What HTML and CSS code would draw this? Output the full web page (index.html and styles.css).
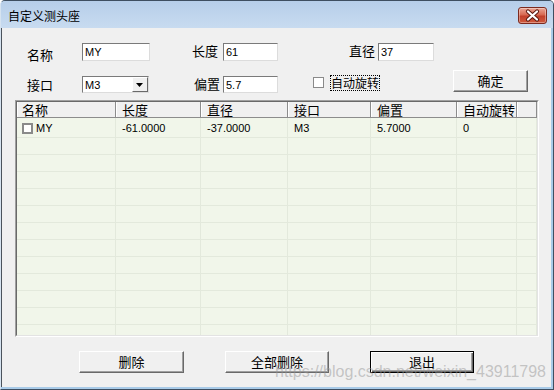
FILE: index.html
```html
<!DOCTYPE html>
<html lang="zh-CN">
<head>
    <meta charset="UTF-8">
    <title>自定义测头座</title>
    <link rel="stylesheet" href="styles.css">
</head>
<body>
    <div class="window">
        <div class="titlebar">
            <span class="title">自定义测头座</span>
            <button class="close" aria-label="关闭">
                <svg width="27" height="15" viewBox="0 0 27 15">
                    <path d="M9 3.5 L18 11.5 M18 3.5 L9 11.5" stroke="#5b1b12" stroke-width="4.2" stroke-linecap="round"/>
                    <path d="M9 3.5 L18 11.5 M18 3.5 L9 11.5" stroke="#ffffff" stroke-width="2.2" stroke-linecap="round"/>
                </svg>
            </button>
        </div>

        <div class="client">
            <div class="row row-top">
                <label class="lbl lbl-name">名称</label>
                <input class="edit edit-name" value="MY">
                <label class="lbl lbl-right w-len">长度</label>
                <input class="edit edit-short" value="61">
                <label class="lbl lbl-right w-dia">直径</label>
                <input class="edit edit-dia" value="37">
            </div>

            <div class="row row-second">
                <label class="lbl lbl-port">接口</label>
                <div class="combo">
                    <span class="combo-text">M3</span>
                    <span class="combo-drop">
                        <svg width="8" height="4" viewBox="0 0 8 4"><path d="M0 0 H7 L3.5 4 Z" fill="#000"/></svg>
                    </span>
                </div>
                <label class="lbl lbl-right w-off">偏置</label>
                <input class="edit edit-short" value="5.7">
                <span class="check"></span>
                <span class="check-label">自动旋转</span>
                <button class="btn btn-ok">确定</button>
            </div>

            <div class="list">
                <div class="list-inner">
                    <table>
                        <colgroup>
                            <col class="c-name"><col class="c-len"><col class="c-dia">
                            <col class="c-port"><col class="c-off"><col class="c-rot"><col class="c-fill">
                        </colgroup>
                        <thead>
                            <tr>
                                <th>名称</th><th>长度</th><th>直径</th><th>接口</th><th>偏置</th><th>自动旋转</th><th></th>
                            </tr>
                        </thead>
                        <tbody>
                            <tr class="data-row">
                                <td class="cell-name"><span class="row-check"></span>MY</td>
                                <td>-61.0000</td><td>-37.0000</td><td>M3</td><td>5.7000</td><td>0</td><td></td>
                            </tr>
                            <tr><td></td><td></td><td></td><td></td><td></td><td></td><td></td></tr>
                            <tr><td></td><td></td><td></td><td></td><td></td><td></td><td></td></tr>
                            <tr><td></td><td></td><td></td><td></td><td></td><td></td><td></td></tr>
                            <tr><td></td><td></td><td></td><td></td><td></td><td></td><td></td></tr>
                            <tr><td></td><td></td><td></td><td></td><td></td><td></td><td></td></tr>
                            <tr><td></td><td></td><td></td><td></td><td></td><td></td><td></td></tr>
                            <tr><td></td><td></td><td></td><td></td><td></td><td></td><td></td></tr>
                            <tr><td></td><td></td><td></td><td></td><td></td><td></td><td></td></tr>
                            <tr><td></td><td></td><td></td><td></td><td></td><td></td><td></td></tr>
                            <tr><td></td><td></td><td></td><td></td><td></td><td></td><td></td></tr>
                            <tr><td></td><td></td><td></td><td></td><td></td><td></td><td></td></tr>
                            <tr><td></td><td></td><td></td><td></td><td></td><td></td><td></td></tr>
                        </tbody>
                    </table>
                </div>
            </div>

            <div class="actions">
                <button class="btn btn-del">删除</button>
                <button class="btn btn-del-all">全部删除</button>
                <button class="btn btn-exit">退出</button>
            </div>
        </div>

        <div class="watermark">https://blog.csdn.net/weixin_43911798</div>
    </div>
</body>
</html>
```

FILE: styles.css
```css
body {
    margin: 0;
    font-family: "Liberation Sans", "Noto Sans CJK SC", sans-serif;
    font-size: 11px;
    color: #000;
    background: #fff;
}

.window {
    position: relative;
    width: 554px;
    height: 390px;
    box-sizing: border-box;
    display: flex;
    flex-direction: column;
    background: #a9cbe8;
    border: 1px solid #3e4e60;
    border-left-color: #d6e3f0;
    border-radius: 5px 5px 0 0;
    overflow: hidden;
}

.titlebar {
    flex: none;
    height: 27px;
    display: flex;
    align-items: flex-start;
    justify-content: space-between;
    padding: 0 6px 0 7px;
    background: linear-gradient(#b6cee9, #c8dbf0);
}

.title {
    font-family: "Noto Sans CJK SC", sans-serif;
    font-size: 12px;
    line-height: 14px;
    margin-top: 8px;
}

.close {
    width: 29px;
    height: 17px;
    margin-top: 6px;
    padding: 0;
    box-sizing: border-box;
    border: 1px solid #7c2a1f;
    border-radius: 3px;
    background: linear-gradient(#eaa695, #d86a52 45%, #c2412b 55%, #cf5a3e);
    box-shadow: inset 0 0 0 1px rgba(255, 255, 255, 0.35);
    display: flex;
    align-items: center;
    justify-content: center;
}

.client {
    flex: 1;
    margin: 0 2px 2px 0;
    background: #f0f0f0;
    border-left: 1px solid #4b535c;
}

.row {
    display: flex;
    padding-left: 25px;
}

.row-top {
    margin-top: 15px;
    height: 18px;
}

.row-second {
    margin-top: 9px;
    height: 23px;
    align-items: flex-start;
}

.lbl {
    font-family: "Noto Sans CJK SC", sans-serif;
    font-size: 13px;
    line-height: 16px;
    box-sizing: border-box;
    flex: none;
}

.lbl-right {
    text-align: right;
}

.lbl-name {
    width: 55px;
    margin-top: 4px;
}

.w-len {
    width: 73px;
    padding-right: 5px;
}

.w-dia {
    width: 100px;
    padding-right: 3px;
}

.lbl-port {
    width: 55px;
    margin-top: 7px;
}

.w-off {
    width: 74px;
    padding-right: 3px;
    margin-top: 6px;
}

.edit {
    flex: none;
    box-sizing: border-box;
    height: 18px;
    margin: 0;
    padding: 0 2px;
    background: #fff;
    border: 1px solid;
    border-color: #7a7a7a #dcdcdc #dcdcdc #7a7a7a;
    font-family: "Liberation Sans", sans-serif;
    font-size: 11px;
    color: #000;
    outline: none;
}

.edit-name {
    width: 68px;
}

.edit-short {
    width: 55px;
}

.edit-dia {
    width: 56px;
}

.row-second .edit {
    height: 17px;
    margin-top: 6px;
}

.combo {
    flex: none;
    width: 67px;
    height: 17px;
    margin-top: 6px;
    box-sizing: border-box;
    display: flex;
    align-items: center;
    background: #fff;
    border: 1px solid;
    border-color: #7a7a7a #dcdcdc #dcdcdc #7a7a7a;
}

.combo-text {
    padding-left: 2px;
}

.combo-drop {
    margin-left: auto;
    width: 16px;
    height: 15px;
    box-sizing: border-box;
    display: flex;
    align-items: center;
    justify-content: center;
    background: #f0f0f0;
    border: 1px solid;
    border-color: #fff #696969 #696969 #fff;
}

.check {
    flex: none;
    width: 11px;
    height: 11px;
    box-sizing: border-box;
    margin: 7px 0 0 35px;
    background: #fff;
    border: 1px solid #8a8a8a;
}

.check-label {
    flex: none;
    width: 50px;
    height: 16px;
    box-sizing: border-box;
    margin: 5px 0 0 6px;
    border: 1px dotted #000;
    font-family: "Noto Sans CJK SC", sans-serif;
    font-size: 12px;
    line-height: 14px;
    text-align: center;
    white-space: nowrap;
}

.btn {
    flex: none;
    height: 22px;
    box-sizing: border-box;
    padding: 0;
    background: #f0f0f0;
    border: 1px solid;
    border-color: #fff #696969 #696969 #fff;
    box-shadow: inset -1px -1px #a0a0a0;
    font-family: "Noto Sans CJK SC", sans-serif;
    font-size: 13px;
    line-height: 18px;
    color: #000;
}

.btn-ok {
    width: 75px;
    margin-left: 73px;
}

.list {
    width: 524px;
    height: 237px;
    margin: 7px 0 0 13px;
    box-sizing: border-box;
    border: 1px solid;
    border-color: #a0a0a0 #fff #fff #a0a0a0;
}

.list-inner {
    height: 100%;
    box-sizing: border-box;
    border: 1px solid;
    border-color: #696969 #e3e3e3 #e3e3e3 #696969;
    background: #f1f6ea;
    overflow: hidden;
}

table {
    width: 520px;
    table-layout: fixed;
    border-collapse: separate;
    border-spacing: 0;
}

.c-name { width: 99px; }
.c-len { width: 85px; }
.c-dia { width: 87px; }
.c-port { width: 83px; }
.c-off { width: 86px; }
.c-rot { width: 60px; }
.c-fill { width: 20px; }

th {
    height: 16px;
    box-sizing: border-box;
    padding: 0 0 0 6px;
    background: #f0f0f0;
    border-right: 1px solid #8c8c8c;
    border-bottom: 1px solid #8c8c8c;
    box-shadow: inset 1px 0 #fff;
    font-family: "Noto Sans CJK SC", sans-serif;
    font-size: 13px;
    font-weight: normal;
    line-height: 15px;
    text-align: left;
    white-space: nowrap;
}

th:first-child {
    padding-left: 5px;
}

td {
    height: 17px;
    box-sizing: border-box;
    padding: 0 0 0 6px;
    border-right: 1px solid #e3e9dc;
    border-bottom: 1px solid #e3e9dc;
    white-space: nowrap;
}

.data-row td {
    height: 20px;
}

td.cell-name {
    padding-left: 5px;
}

.row-check {
    display: inline-block;
    width: 11px;
    height: 11px;
    box-sizing: border-box;
    margin-right: 3px;
    vertical-align: -2px;
    background: #fff;
    border: 2px solid #8a8a8a;
}

.actions {
    display: flex;
    gap: 41px;
    margin-top: 14px;
    padding-left: 77px;
}

.btn-del {
    width: 105px;
}

.btn-del-all,
.btn-exit {
    width: 104px;
}

.btn-exit {
    border: 1px solid #000;
    box-shadow: inset 1px 1px #fff, inset -1px -1px #696969, inset -2px -2px #a0a0a0;
}

.watermark {
    position: absolute;
    left: 274px;
    top: 362px;
    font-family: "Liberation Sans", sans-serif;
    font-size: 16px;
    line-height: 18px;
    color: rgba(150, 150, 150, 0.5);
    white-space: nowrap;
    pointer-events: none;
}
```
